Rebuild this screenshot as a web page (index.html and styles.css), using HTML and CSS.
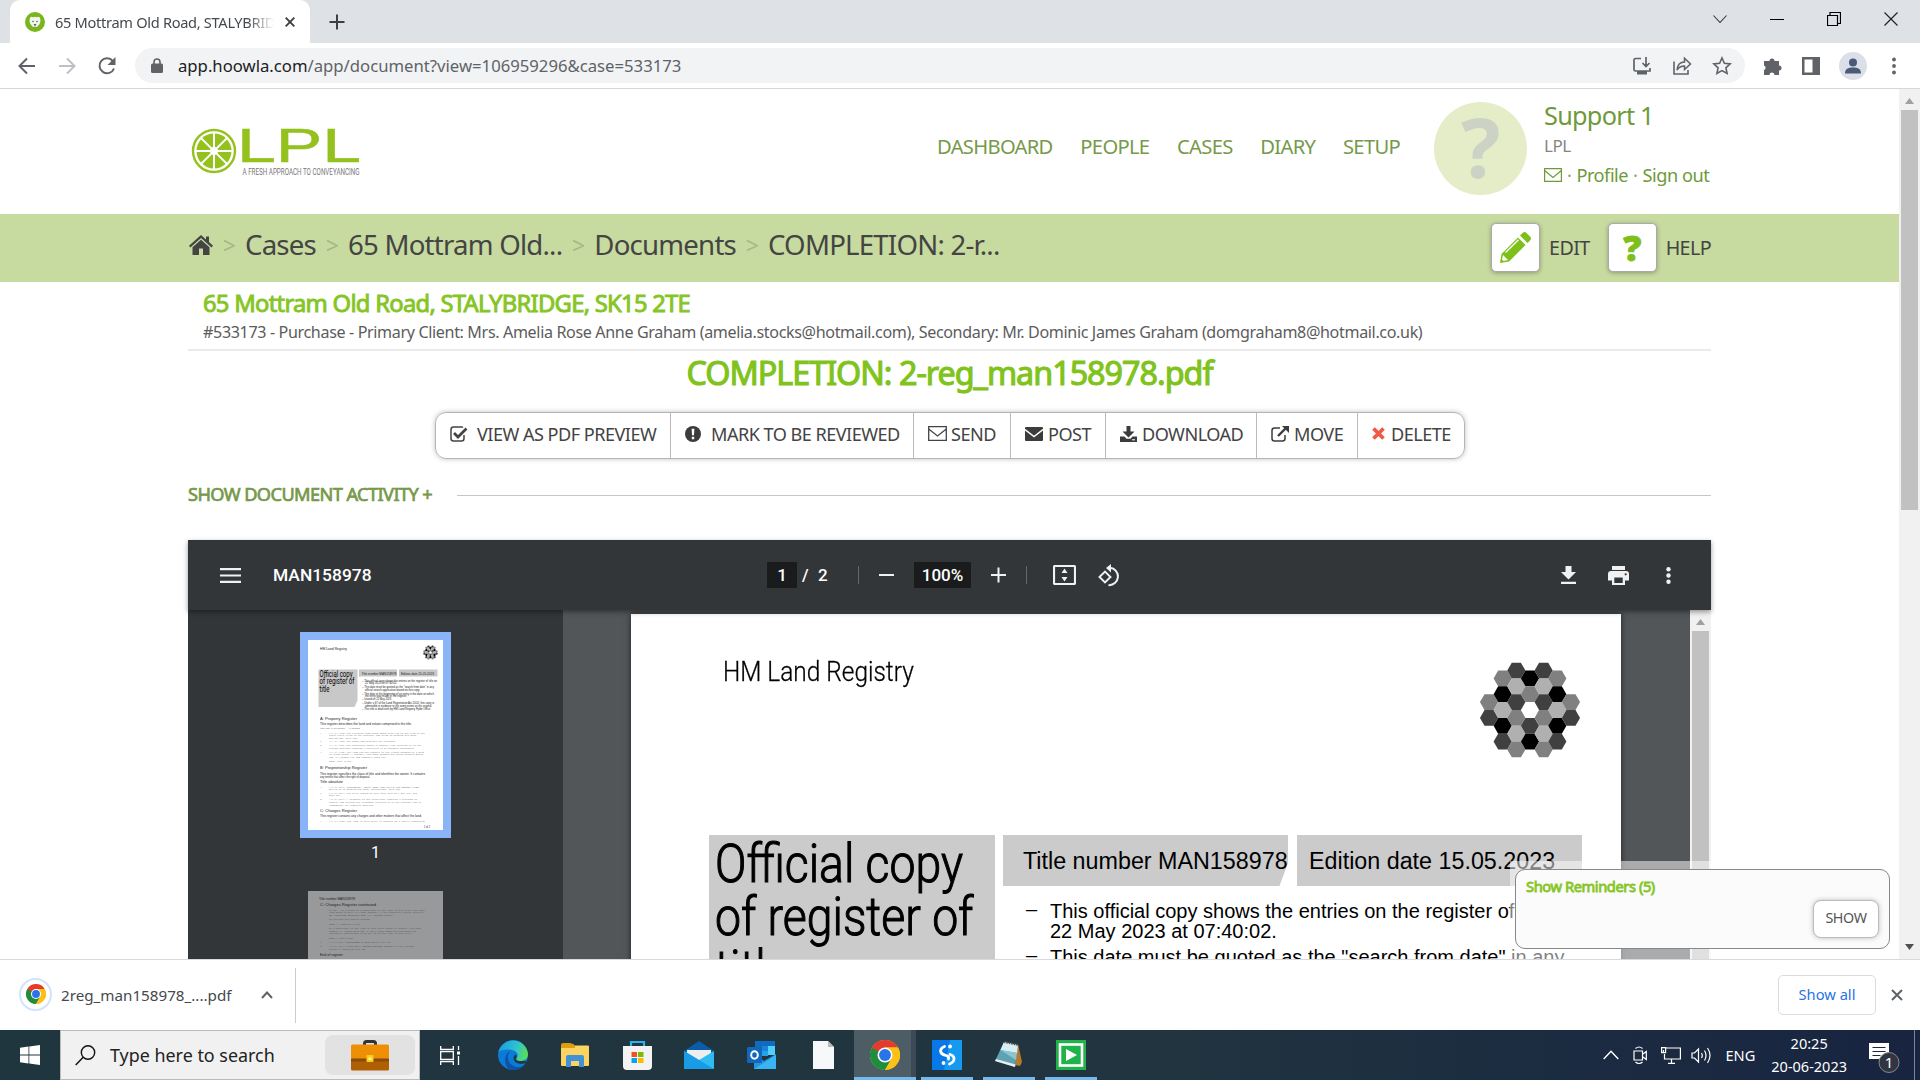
FILE: index.html
```html
<!DOCTYPE html>
<html lang="en">
<head>
<meta charset="utf-8">
<title>65 Mottram Old Road, STALYBRIDGE</title>
<link rel="stylesheet" href="styles.css">
</head>
<body>
<svg class="defs" width="0" height="0">
  <symbol id="chrome" viewBox="0 0 48 48">
    <circle cx="24" cy="24" r="24" fill="#fbc116"/>
    <path d="M24 24 3.2 12A24 24 0 0 0 24 48L34.4 30z" fill="#1e8e3e"/>
    <path d="M3.2 12A24 24 0 0 1 44.8 12H24L13.6 30z" fill="#e33b2e"/>
    <path d="M3.2 12 13.6 30 24 24z" fill="#1e8e3e"/>
    <path d="M24 12H44.8A24 24 0 0 1 24 48L34.4 30z" fill="#fbc116"/>
    <circle cx="24" cy="24" r="12" fill="#fff"/><circle cx="24" cy="24" r="9.5" fill="#2b74e8"/>
  </symbol>
  <symbol id="hexes" viewBox="-51 -49 102 98">
    <g id="hexgroup"></g>
  </symbol>
</svg>

<div class="tabstrip">
  <div class="tab">
    <svg width="20" height="20" viewBox="0 0 20 20"><circle cx="10" cy="10" r="10" fill="#7ab51d"/><path d="M5 6a2 2 0 0 1 3-.8 5 5 0 0 1 4 0A2 2 0 0 1 15 6c.7 2 .6 4-.4 6L12 15H8l-2.600-3C4.400 10 4.300 8 5 6z" fill="#f2f6ea"/><circle cx="8" cy="9.500" r=".8" fill="#567"/><circle cx="12" cy="9.500" r=".8" fill="#567"/><path d="M8.700 12h2.600L10 15z" fill="#567"/></svg>
    <span class="tab-title">65 Mottram Old Road, STALYBRIDGE</span>
    <svg class="tab-x" width="10" height="10" viewBox="0 0 10 10"><path d="M.7.7l8.600 8.600M9.300.7.7 9.300" stroke="#3c4043" stroke-width="1.900"/></svg>
  </div>
  <svg class="newtab" width="16" height="16" viewBox="0 0 16 16"><path d="M8 .5v15M.5 8h15" stroke="#3c4043" stroke-width="2"/></svg>
  <div class="winbtns">
    <svg viewBox="0 0 14 14"><path d="M.5 3.500 7 10.500l6.500-7" fill="none" stroke="#333" stroke-width="1.100"/></svg>
    <svg viewBox="0 0 14 14"><path d="M0 7.500h14" stroke="#000"/></svg>
    <svg viewBox="0 0 14 14"><path d="M.5 3.500h10v10H.5zM3 3V.5h10.500v11H11" fill="none" stroke="#000" stroke-width="1.200"/></svg>
    <svg viewBox="0 0 14 14"><path d="M.5.5l13 13M13.500.5l-13 13" stroke="#222" stroke-width="1.200"/></svg>
  </div>
</div>

<div class="toolbar">
  <svg class="nav-ic" viewBox="0 0 20 20"><path d="M18 10H3M10 2.500 2.500 10 10 17.500" fill="none" stroke="#5f6368" stroke-width="2"/></svg>
  <svg class="nav-ic" viewBox="0 0 20 20"><path d="M2 10h15M10 2.500l7.500 7.500-7.500 7.500" fill="none" stroke="#bdc1c6" stroke-width="2"/></svg>
  <svg class="nav-ic" viewBox="0 0 20 20"><path d="M17 12.500A7.500 7.500 0 1 1 15.800 5" fill="none" stroke="#5f6368" stroke-width="2"/><path d="M18.500 1v8h-8z" fill="#5f6368"/></svg>
  <div class="omnibox">
    <svg width="12" height="15" viewBox="0 0 12 15"><path d="M3 6V4a3 3 0 0 1 6 0v2" fill="none" stroke="#5f6368" stroke-width="1.600"/><rect y="5.500" width="12" height="9.500" rx="1.500" fill="#5f6368"/></svg>
    <span class="url"><b>app.hoowla.com</b>/app/document?view=106959296&amp;case=533173</span>
    <svg class="om-ic" viewBox="0 0 20 20"><path d="M9 2.500H3.500q-1.500 0-1.500 1.500v9.500q0 1.500 1.500 1.500h14.500v-3M14 1v9M10.500 7l3.500 3.500L17.500 7" fill="none" stroke="#5f6368" stroke-width="1.700"/><path d="M5 15h10v3.500H5z" fill="#5f6368"/></svg>
    <svg class="om-ic" viewBox="0 0 20 20"><path d="M2 5.500V18h14v-4" fill="none" stroke="#5f6368" stroke-width="1.600"/><path d="M5 14c.5-5 3-8 7.500-8V2.200L18.500 8l-6 5.500V10c-3.500 0-5.500 1-7.500 4z" fill="none" stroke="#5f6368" stroke-width="1.500"/></svg>
    <svg class="om-ic" viewBox="0 0 20 20"><path d="M10 2l2.400 5.300 5.800.6-4.300 3.900 1.200 5.700L10 14.600l-5.100 2.900 1.200-5.700L1.800 7.900l5.800-.6z" fill="none" stroke="#5f6368" stroke-width="1.600"/></svg>
  </div>
  <div class="tb-right">
    <svg viewBox="0 0 20 20"><path d="M1 5h5.500a2.500 2.500 0 1 1 5 0H16v4.500a2.500 2.500 0 1 1 0 5V19h-4.500a2.500 2.500 0 0 0-5 0H1v-5a2.400 2.400 0 0 0 0-4.500z" fill="#5f6368"/></svg>
    <svg viewBox="0 0 20 20"><path d="M1 1h18v18H1zM3.500 3.500v13h8v-13z" fill="#5f6368" fill-rule="evenodd"/></svg>
    <svg class="me" viewBox="0 0 28 28"><circle cx="14" cy="14" r="14" fill="#dadfe8"/><circle cx="14" cy="10.500" r="4" fill="#4a5a78"/><path d="M6 21.500c0-4.500 3-6 8-6s8 1.500 8 6z" fill="#4a5a78"/></svg>
    <svg viewBox="0 0 20 20"><g fill="#5f6368"><circle cx="10" cy="3.500" r="1.900"/><circle cx="10" cy="10" r="1.900"/><circle cx="10" cy="16.500" r="1.900"/></g></svg>
  </div>
</div>

<div class="viewport">
 <div class="page">
  <header class="header">
    <svg class="logo" width="172" height="52" viewBox="0 0 172 52">
      <circle cx="23" cy="24" r="21" fill="#fff" stroke="#95c11f" stroke-width="2.400"/>
      <circle cx="23" cy="24" r="17.500" fill="#95c11f"/>
      <path d="M23 5v38M4 24h38M9.600 10.600l26.800 26.800M36.400 10.600 9.600 37.400" stroke="#fff" stroke-width="2"/><circle cx="23" cy="24" r="4" fill="#fff"/>
      <text x="46" y="34.500" class="logo-big" textLength="124" lengthAdjust="spacingAndGlyphs">LPL</text>
      <text x="51.500" y="47.500" class="logo-small" textLength="117" lengthAdjust="spacingAndGlyphs">A FRESH APPROACH TO CONVEYANCING</text>
    </svg>
    <nav class="nav"><a>DASHBOARD</a><a>PEOPLE</a><a>CASES</a><a>DIARY</a><a>SETUP</a></nav>
    <div class="avatar">?</div>
    <div class="user">
      <div class="user-name">Support 1</div>
      <div class="user-co">LPL</div>
      <div class="user-links"><svg width="18" height="14" viewBox="0 0 18 14"><path d="M.6.6h16.800v12.800H.6zM.6 2.500 9 9.500l8.400-7" fill="none" stroke="#6f9a3a" stroke-width="1.200"/></svg><i>·</i><a>Profile</a><i>·</i><a>Sign out</a></div>
    </div>
  </header>

  <div class="crumbbar">
    <svg width="24" height="20" viewBox="0 0 24 20"><path d="M12 0l5 4.400V1.500h3v5.600l4 3.700-1.400 1.600L12 3 1.400 12.400 0 10.800z" fill="#444"/><path d="M12 4.800l8.500 7.500V20H14v-6.500h-4V20H3.500v-7.700z" fill="#444"/></svg>
    <i>&gt;</i><span>Cases</span><i>&gt;</i><span>65 Mottram Old...</span><i>&gt;</i><span>Documents</span><i>&gt;</i><span>COMPLETION: 2-r...</span>
    <div class="crumb-actions">
      <b class="sq"><svg width="31" height="31" viewBox="0 0 31 31"><path d="M0 31l1.500-9L18 5.500 25.500 13 9 29.500zM20 3.500l2.500-2.500q2-2 4 0l3.500 3.500q2 2 0 4L27.500 11z" fill="#7ebf1a"/><path d="M5.500 20.500 18.500 7.800" stroke="#fff" stroke-width="1.300"/><path d="M3 23l5 5-4.500 1-1.500-1.500z" fill="#fff"/></svg></b><em>EDIT</em>
      <b class="sq sq-q">?</b><em>HELP</em>
    </div>
  </div>

  <main class="content">
    <section class="case">
      <h2>65 Mottram Old Road, STALYBRIDGE, SK15 2TE</h2>
      <p>#533173 - Purchase - Primary Client: Mrs. Amelia Rose Anne Graham (amelia.stocks@hotmail.com), Secondary: Mr. Dominic James Graham (domgraham8@hotmail.co.uk)</p>
    </section>
    <h1>COMPLETION: 2-reg_man158978.pdf</h1>
    <div class="btns">
      <a class="b1"><svg width="18" height="16" viewBox="0 0 18 16"><path d="M14 9v3.500q0 2.500-2.500 2.500H3.500Q1 15 1 12.500v-9Q1 1 3.500 1h8q1 0 1.500.5" fill="none" stroke="#444" stroke-width="1.500"/><path d="M4 7l4 4L16.500 2.500" fill="none" stroke="#444" stroke-width="2.800"/></svg>VIEW AS PDF PREVIEW</a>
      <a class="b2"><svg width="16" height="16" viewBox="0 0 16 16"><circle cx="8" cy="8" r="8" fill="#3c3c3c"/><path d="M6.600 2.700h2.800L9 9.300H7zM6.800 10.800h2.400v2.400H6.800z" fill="#fff"/></svg>MARK TO BE REVIEWED</a>
      <a class="b3"><svg width="19" height="15" viewBox="0 0 19 15"><path d="M.7.7h17.600v13.600H.7zM.7 3l8.800 7L18.300 3" fill="none" stroke="#444" stroke-width="1.300"/></svg>SEND</a>
      <a class="b4"><svg width="18" height="14" viewBox="0 0 18 14"><rect width="18" height="14" rx="1" fill="#3c3c3c"/><path d="M0 2.500l9 7 9-7" fill="none" stroke="#fff" stroke-width="1.400"/></svg>POST</a>
      <a class="b5"><svg width="17" height="16" viewBox="0 0 17 16"><path d="M6.500 0h4v5.500h4l-6 6-6-6h4zM0 10.500h4.500l2 2.300h4l2-2.300H17V16H0z" fill="#3c3c3c"/><path d="M12 13.800h3" stroke="#fff"/></svg>DOWNLOAD</a>
      <a class="b6"><svg width="18" height="16" viewBox="0 0 18 16"><path d="M9 2H3.500Q1 2 1 4.500v8Q1 15 3.500 15h8q2.500 0 2.500-2.500V9" fill="none" stroke="#3c3c3c" stroke-width="1.500"/><path d="M7 10l8-8" stroke="#3c3c3c" stroke-width="2.400"/><path d="M11 0h7v7z" fill="#3c3c3c"/></svg>MOVE</a>
      <a class="b7"><svg width="13" height="13" viewBox="0 0 13 13"><path d="M1.500 1.500l10 10M11.500 1.500l-10 10" stroke="#f05a44" stroke-width="3.800"/></svg>DELETE</a>
    </div>
    <div class="activity"><span>SHOW DOCUMENT ACTIVITY +</span><hr></div>

    <div class="pdf">
      <div class="pdf-bar">
        <svg class="menu" width="21" height="15" viewBox="0 0 21 15"><path d="M0 1.200h21M0 7.500h21M0 13.800h21" stroke="#f1f1f1" stroke-width="2.200"/></svg>
        <span class="pdf-name">MAN158978</span>
        <span class="pdf-in pg">1</span><span class="slash">/</span><span class="total">2</span>
        <i class="sep"></i>
        <svg class="minus" width="15" height="16" viewBox="0 0 15 16"><path d="M0 8h15" stroke="#f1f1f1" stroke-width="2"/></svg>
        <span class="pdf-in zoom">100%</span>
        <svg class="plus" width="15" height="16" viewBox="0 0 15 16"><path d="M0 8h15M7.500.5v15" stroke="#f1f1f1" stroke-width="2"/></svg>
        <i class="sep sep2"></i>
        <svg class="fit" width="23" height="20" viewBox="0 0 23 20"><rect x="1" y="1" width="21" height="18" rx="1" fill="none" stroke="#f1f1f1" stroke-width="2.200"/><path d="M11.500 3.500 14.500 8h-6zM11.500 16.500 8.500 12h6z" fill="#f1f1f1"/></svg>
        <svg class="rot" width="23" height="23" viewBox="0 0 23 23"><path d="M1.500 13l5.500-5.500 5.500 5.500L7 18.500z" fill="none" stroke="#f1f1f1" stroke-width="1.900"/><path d="M12 3.800a8.400 8.400 0 1 1-1.500 17.300" fill="none" stroke="#f1f1f1" stroke-width="2"/><path d="M8 4l5-4v8.500z" fill="#f1f1f1"/></svg>
        <div class="pdf-right">
          <svg width="15" height="18" viewBox="0 0 15 18"><path d="M4.500 0h6v6H15l-7.500 7.500L0 6h4.500zM0 15.800h15V18H0z" fill="#f1f1f1"/></svg>
          <svg width="21" height="19" viewBox="0 0 21 19"><path d="M4 0h13v4H4zM3 5h15q3 0 3 3v6.500h-4V19H4v-4.500H0V8q0-3 3-3zM6.300 11.500V17h8.400v-5.500z" fill="#f1f1f1" fill-rule="evenodd"/><circle cx="17.700" cy="8.300" r="1.100" fill="#323639"/></svg>
          <svg width="5" height="17" viewBox="0 0 5 17"><g fill="#f1f1f1"><circle cx="2.500" cy="2.300" r="2.200"/><circle cx="2.500" cy="8.500" r="2.200"/><circle cx="2.500" cy="14.700" r="2.200"/></g></svg>
        </div>
      </div>
      <div class="pdf-body">
        <aside class="thumbs">
          <div class="thumb sel">
            <svg width="135" height="190" viewBox="0 0 135 190" class="mini">
              <rect width="135" height="190" fill="#fff"/>
              <text x="12" y="9.500" class="m4" textLength="27">HM Land Registry</text>
              <use href="#hexes" x="115" y="5" width="15" height="15"/>
              <path d="M10.500 29.500h39v31l-3 6.500h-36zM51 29.500h38v7H51zM91 29.500h38.500v7H91z" fill="#c8c8c8"/>
              <g class="m7"><text x="11.500" y="36.500" textLength="33">Official copy</text><text x="11.500" y="44" textLength="35">of register of</text><text x="11.500" y="51.500" textLength="10">title</text></g>
              <g class="m3 dk"><text x="53.500" y="34.500" textLength="35">Title number MAN158978</text><text x="93" y="34.500" textLength="33">Edition date 15.05.2023</text>
              <text x="54" y="41.500" textLength="75">– This official copy shows the entries on the register of title on</text><text x="57" y="44.300" textLength="32">22 May 2023 at 07:40:02.</text><text x="54" y="48.300" textLength="72">– This date must be quoted as the "search from date" in any</text><text x="57" y="51.300" textLength="55">official search application based on this copy.</text><text x="54" y="54.500" textLength="72">– The date at the beginning of an entry is the date on which</text><text x="57" y="57.300" textLength="42">the entry was made in the register.</text><text x="54" y="60.300" textLength="30">– Issued on 22 May 2023.</text><text x="54" y="64.300" textLength="72">– Under s.67 of the Land Registration Act 2002, this copy is</text><text x="57" y="67.200" textLength="67">admissible in evidence to the same extent as the original.</text><text x="54" y="70.200" textLength="69">– This title is dealt with by HM Land Registry Fylde Office.</text>
              <text x="12" y="84.500" textLength="92">This register describes the land and estate comprised in the title.</text><text x="12" y="134.500" textLength="105">This register specifies the class of title and identifies the owner. It contains</text><text x="12" y="137.500" textLength="50">any entries that affect the right of disposal.</text><text x="12" y="143.200" textLength="23">Title absolute</text><text x="12" y="177.300" textLength="102">This register contains any charges and other matters that affect the land.</text></g>
              <g class="m4"><text x="12" y="79.500" textLength="37">A: Property Register</text><text x="12" y="129.200" textLength="47">B: Proprietorship Register</text><text x="12" y="171.800" textLength="37">C: Charges Register</text></g>
              <g class="m3 lt"><text x="12" y="89.300" textLength="40">GREATER MANCHESTER : TAMESIDE</text><text x="21" y="93.700" textLength="96">(11.04.1975) The Freehold land shown edged with red on the plan of the</text><text x="21" y="96.300" textLength="88">above title filed at the Registry and being 65 Mottram Old Road,</text><text x="21" y="99" textLength="30">Stalybridge (SK15 2TE).</text><text x="21" y="102" textLength="67">(11.04.1975) The mines and minerals are excepted.</text><text x="21" y="106" textLength="92">(11.04.1975) The Conveyance dated 15 January 1975 referred to in the</text><text x="21" y="109" textLength="86">Charges Register contains a provision as to boundary structures.</text><text x="21" y="112.600" textLength="95">(11.04.1975) The land has the benefit of the rights granted by a Deed</text><text x="21" y="115.200" textLength="94">of Grant dated 14 October 1975 made between the North Western Board</text><text x="21" y="117.700" textLength="58">and (2) Thomas Fay and Campbell Ross Fay.</text><text x="21" y="122" textLength="23">NOTE: Copy filed.</text>
              <text x="21" y="147.500" textLength="90">(12.04.2021) PROPRIETOR: AMELIA ROSE ANNE GRAHAM and DOMINIC JAMES</text><text x="21" y="150" textLength="72">GRAHAM of 65 Mottram Old Road, Stalybridge, SK15 2TE.</text><text x="21" y="153.700" textLength="88">(12.04.2021) The price stated to have been paid on 9 May 2021 was</text><text x="21" y="156" textLength="12">£320,000.</text><text x="21" y="160" textLength="88">(12.04.2021) A transfer to the proprietor contains a covenant to</text><text x="21" y="163" textLength="92">observe and perform the covenants referred to in the register and of</text><text x="21" y="165.600" textLength="46">indemnity in respect thereof.</text><text x="21" y="182" textLength="96">(11.04.1975) The land in this title is subject to a yearly rentcharge</text>
              <text x="12" y="93.700">1</text><text x="12" y="102">2</text><text x="12" y="106">3</text><text x="12" y="112.600">4</text><text x="12" y="147.500">1</text><text x="12" y="153.700">2</text><text x="12" y="160">3</text><text x="12" y="182">1</text></g>
              <text x="116" y="187.500" class="m3 dk" textLength="6">1 of 2</text>
            </svg>
          </div>
          <div class="thumb-no">1</div>
          <div class="thumb dim">
            <svg width="135" height="190" viewBox="0 0 135 190" class="mini">
              <rect width="135" height="190" fill="#98999b"/>
              <text x="11" y="9" class="m3 dk" textLength="36">Title number MAN158978</text>
              <text x="12" y="15" class="m4" textLength="56">C: Charges Register continued</text>
              <g class="m3 lt2"><text x="21" y="19.500" textLength="96">of £31. 10s created by a Conveyance of the land in this title and other</text><text x="21" y="22.200" textLength="94">land dated 28 July 1919 made between (1) The Honourable George Nicholas</text><text x="21" y="24.800" textLength="65">de Yarburgh Bateson and (2) Thomas Marsh.</text><text x="21" y="28.800" textLength="42">The said deed also contains covenants.</text><text x="21" y="34" textLength="32">NOTE 1: Abstract filed.</text><text x="21" y="37.800" textLength="92">By a Conveyance of the land in this title dated 15 January 1925 made</text><text x="21" y="40.500" textLength="87">between (1) Thomas Marsh and (2) Mary Hannah Ogden the rentcharge was</text><text x="21" y="43.200" textLength="84">informally apportioned as to £3. 7s to the land in this title.</text><text x="21" y="48" textLength="25">NOTE 2: Copy filed.</text><text x="12" y="52">2</text><text x="21" y="52" textLength="64">(12.04.2021) REGISTERED CHARGE dated 9 May 2021.</text><text x="12" y="56">3</text><text x="21" y="56" textLength="85">(12.04.2021) Proprietor: NEWTON BUILDING SOCIETY of The Savings</text><text x="21" y="58.600" textLength="37">Chapter 21 Cumberland SK15 2JB.</text></g>
              <text x="12" y="65" class="m3 dk" textLength="23">End of register</text>
            </svg>
          </div>
        </aside>
        <div class="doc-area">
          <article class="doc">
            <div class="doc-head">
              <div class="hmlr">HM Land Registry</div>
              <svg class="hex" width="102" height="98" viewBox="-51 -49 102 98"><use href="#hexgroup"/></svg>
            </div>
            <div class="doc-grid">
              <div class="official"><p>Official copy<br>of register of<br>title</p></div>
              <div class="doc-main">
                <div class="boxes"><div class="box cut">Title number MAN158978</div><div class="box ed">Edition date 15.05.2023</div></div>
                <ul class="notes">
                  <li>This official copy shows the entries on the register of title on<br>22 May 2023 at 07:40:02.</li>
                  <li>This date must be quoted as the "search from date" in any</li>
                </ul>
              </div>
            </div>
          </article>
        </div>
        <div class="sb"><svg width="9" height="6" viewBox="0 0 9 6"><path d="M0 6 4.500 0 9 6z" fill="#a0a0a0"/></svg><div class="sb-thumb"></div></div>
      </div>
    </div>
  </main>
 </div>
 <div class="sb page-sb"><svg width="9" height="6" viewBox="0 0 9 6"><path d="M0 6 4.500 0 9 6z" fill="#a0a0a0"/></svg><div class="sb-thumb"></div><svg class="down" width="9" height="6" viewBox="0 0 9 6"><path d="M0 0 4.500 6 9 0z" fill="#505050"/></svg></div>
 <div class="rem-wrap"><div class="reminder"><strong>Show Reminders (5)</strong><span class="show">SHOW</span></div></div>
</div>

<div class="downloads">
  <div class="dl-icon"><svg width="20" height="20"><use href="#chrome"/></svg></div>
  <span class="dl-name">2reg_man158978_....pdf</span>
  <svg class="dl-chev" width="12" height="8" viewBox="0 0 12 8"><path d="M1 7l5-5.500L11 7" fill="none" stroke="#5f6368" stroke-width="2"/></svg>
  <i class="dl-div"></i>
  <span class="showall">Show all</span>
  <svg width="12" height="12" viewBox="0 0 12 12"><path d="M1 1l10 10M11 1 1 11" stroke="#5f6368" stroke-width="2"/></svg>
</div>

<div class="taskbar">
  <div class="start"><svg width="20" height="20" viewBox="0 0 20 20"><path d="M0 2.800 8.500 1.600v8H0zM9.300 1.500 20 0v9.600H9.300zM0 10.400h8.500v8L0 17.200zM9.300 10.400H20V20L9.300 18.500z" fill="#fff"/></svg></div>
  <div class="search">
    <svg width="21" height="21" viewBox="0 0 21 21"><circle cx="13" cy="7.500" r="6.700" fill="none" stroke="#111" stroke-width="1.400"/><path d="M8.200 12.300.7 20" stroke="#111" stroke-width="1.500"/></svg>
    <span>Type here to search</span>
    <div class="case-ic"><svg width="38" height="31" viewBox="0 0 38 31"><path d="M13.500 5V3.500q0-2 2-2h7q2 0 2 2V5" fill="none" stroke="#333" stroke-width="3"/><rect y="4.500" width="38" height="14" rx="1.500" fill="#ee8f05"/><path d="M0 18.500h38v10.500q0 1.500-1.500 1.500h-35Q0 30.500 0 29z" fill="#b06004"/><path d="M0 18.500h38v3H0z" fill="#8f4b02"/><rect x="15.500" y="15" width="7" height="7" rx="1" fill="#fdd017"/><rect x="17.500" y="17.500" width="3" height="2.500" fill="#fff29a"/></svg></div>
  </div>
  <div class="apps">
    <div class="app tv"><svg width="20" height="19" viewBox="0 0 20 19"><path d="M.7 0v3.300h12.600V0M.7 19v-3.300h12.600V19M.7 5.500h12.600v8H.7zM18.500 0v4M18.500 10v9" fill="none" stroke="#fff" stroke-width="1.300"/><path d="M17 5.500h3v3h-3z" fill="#fff"/></svg></div>
    <div class="app"><svg width="30" height="30" viewBox="0 0 30 30"><defs><linearGradient id="eg" x1="0" x2="1" y1=".3" y2=".5"><stop offset="0" stop-color="#1b9de2"/><stop offset=".6" stop-color="#2fc3cf"/><stop offset="1" stop-color="#5fdc52"/></linearGradient></defs><circle cx="15" cy="15" r="15" fill="#0c7bd8"/><path d="M.5 12A15 15 0 0 1 30 14c0 5-4 7-7.500 7-4 0-5-2-3.500-3.500 2-3-.5-6.500-5-7.500C8 9 3 10 .5 12z" fill="url(#eg)"/><path d="M12 11c-4 6-2 13 5 15.500 5 1.500 9-.5 11-3.500A15 15 0 0 1 12 29.700C5 26 6 14 12 11z" fill="#0f53a5"/><path d="M18.500 17.500c-1.500 2 0 3.500 4 3.500h5.500l1 1.500c-6 3-13 1-13.500-4 0-2 1-3.500 2-4 1.500 1 1.500 2 1 3z" fill="#213a48"/></svg></div>
    <div class="app"><svg width="28" height="24" viewBox="0 0 28 24"><path d="M0 2q0-2 2-2h8l3 3h-2v5H0z" fill="#d99a0b"/><rect y="2.500" width="28" height="20.500" rx="1" fill="#fcd462"/><path d="M0 2h10l2-1.500L14 3v2H0z" fill="#dfa010"/><path d="M5 24V14q0-2 2-2h14q2 0 2 2v10h-5v-6h-8v6z" fill="#3f92d8"/></svg></div>
    <div class="app"><svg width="29" height="29" viewBox="0 0 29 29"><path d="M8 8V1h13v7" fill="none" stroke="#2bb2ec" stroke-width="2.200"/><path d="M0 5h29v20q0 4-4 4H4q-4 0-4-4z" fill="#f3f3f3"/><path d="M8.500 11h5.500v5H8.500z" fill="#f25022"/><path d="M15 11h5.500v5H15z" fill="#7fba00"/><path d="M8.500 17h5.500v5H8.500z" fill="#00a4ef"/><path d="M15 17h5.500v5H15z" fill="#ffb900"/></svg></div>
    <div class="app"><svg width="30" height="28" viewBox="0 0 30 28"><path d="M0 10 15 0l15 10v3H0z" fill="#0b5ba9"/><path d="M3 9h24v6L15 20 3 15z" fill="#eee"/><path d="M0 10l15 9 15-9v18H0z" fill="#2dbdf2"/><path d="M15 19 30 28H0V10z" fill="#1a9be6"/></svg></div>
    <div class="app"><svg width="29" height="28" viewBox="0 0 29 28"><path d="M8 0h20v14H8z" fill="#0d6cc2"/><path d="M15 5h6v5h-6z" fill="#1b84d8"/><path d="M21 5h7v9h-7z" fill="#4fd0fb"/><path d="M14 10h7v5h-7z" fill="#23a3ea"/><path d="M7 13l10 7 12-7v15H7z" fill="#2294e2"/><path d="M7 28 29 14v14z" fill="#3ab5f4"/><rect y="6" width="15" height="16" rx="1.500" fill="#1267bd"/><ellipse cx="7.500" cy="14" rx="3.300" ry="3.700" fill="none" stroke="#fff" stroke-width="2"/></svg></div>
    <div class="app"><svg width="21" height="28" viewBox="0 0 21 28"><path d="M0 0h15l6 6v22H0z" fill="#f7f8f9"/><path d="M15 0v6h6z" fill="#b5babd"/></svg></div>
    <div class="app active"><svg width="30" height="30"><use href="#chrome"/></svg></div>
    <div class="app run"><svg width="30" height="30" viewBox="0 0 30 30"><rect width="30" height="30" fill="#0877e8"/><path d="M18 0h12v30H12z" fill="#1699f0"/><path d="M12.500 6.500q-5 2-3.500 6 1 2 5 3 3.500 1 2.500 3.500M17.500 24q5-2 4.500-6-.5-2.500-4-3.500" fill="none" stroke="#fff" stroke-width="2.800" stroke-linecap="round"/><circle cx="18" cy="6.500" r="1.900" fill="#fff"/><circle cx="11.500" cy="23" r="1.900" fill="#fff"/></svg></div>
    <div class="app run"><svg width="28" height="28" viewBox="0 0 28 28"><path d="M23 3l4 18-2 4-5-1z" fill="#b8792c"/><path d="M9 1l14 3-3 22L0 20z" fill="#5da3b3"/><path d="M9 1l14 3-1 8L5.500 9z" fill="#d6edf2"/><path d="M5.500 9 22 12l-1 7z" fill="#8cc4cf"/><path d="M0 20l20 6 .5-2.500L1 18z" fill="#e8eef0"/><path d="M9 1l14 3" stroke="#555" stroke-width="2" stroke-dasharray="1.500 1"/></svg></div>
    <div class="app run"><svg width="30" height="30" viewBox="0 0 30 30"><rect width="30" height="30" fill="#21b34b"/><rect x="4" y="4.500" width="22" height="21" fill="none" stroke="#fff" stroke-width="2.600"/><path d="M10 9l11 6-11 6z" fill="#fff"/></svg></div>
  </div>
  <div class="tray">
    <svg width="16" height="10" viewBox="0 0 16 10"><path d="M.7 9 8 1.300 15.300 9" fill="none" stroke="#fff" stroke-width="1.400"/></svg>
    <svg width="14" height="18" viewBox="0 0 14 18"><path d="M1 5h8.500v9H1zM10 8l3.300-2.500v8L10 11M2.500 2.500q3.500-3 7 0M2.500 16q3.500 3 7 0" fill="none" stroke="#fff" stroke-width="1.200"/></svg>
    <svg width="20" height="17" viewBox="0 0 20 17"><path d="M5 1h14.400v11H3.500V7M7 16.300h7M10.500 12v4M.6.6h4v5h-4zM2.500 3v3" fill="none" stroke="#fff" stroke-width="1.200"/></svg>
    <svg class="spk" width="20" height="17" viewBox="0 0 20 17"><path d="M1 6h2.500L7.500 2v13l-4-4H1zM10.500 6q1.500 2.500 0 5M13.500 3.500q3 5 0 10M16.500 1q5 7.500 0 15" fill="none" stroke="#fff" stroke-width="1.200"/></svg>
    <span class="eng">ENG</span>
    <span class="clock">20:25<br>20-06-2023</span>
    <svg class="notif" width="32" height="32" viewBox="0 0 32 32"><path d="M1 1h20v16h-6l-4 4v-4H1z" fill="#fff"/><path d="M4.500 5.500h13M4.500 9.500h13M4.500 13.500h8" stroke="#1a2740" stroke-width="1.200"/><circle cx="21" cy="20.500" r="10" fill="#303641" stroke="#888" stroke-width="1"/><text x="21" y="26" text-anchor="middle" class="n1">1</text></svg>
    <i class="peek"></i>
  </div>
</div>
<script src="page.js"></script>
</body>
</html>
```
FILE: styles.css
```css
* { box-sizing: border-box; }
html, body { margin: 0; width: 1920px; height: 1080px; overflow: hidden; }
body { font-family: "Noto Sans", "Open Sans", sans-serif; background: #fff; display: flex; flex-direction: column; white-space: nowrap; }
svg { display: block; flex: none; }
i, em { font-style: normal; }
h1, h2, p, ul { margin: 0; padding: 0; }
.defs { position: absolute; }

/* browser chrome */
.tabstrip { height: 43px; flex: none; background: #dee1e6; display: flex; align-items: center; padding-left: 10px; }
.tab { width: 300px; height: 43px; background: #fff; border-radius: 10px 10px 0 0; display: flex; align-items: center; padding: 0 15px; }
.tab-title { font-size: 14.6px; letter-spacing: -.3px; color: #45494d; width: 219px; margin-left: 10px; overflow: hidden; -webkit-mask-image: linear-gradient(90deg, #000 88%, transparent); mask-image: linear-gradient(90deg, #000 88%, transparent); }
.tab-x { margin-left: 11px; }
.newtab { margin-left: 19px; }
.winbtns { margin-left: auto; display: flex; gap: 43px; padding: 0 22px 6px 0; }
.winbtns svg { width: 14px; height: 14px; }
.toolbar { height: 46px; flex: none; border-bottom: 1px solid #d5d7da; display: flex; align-items: center; padding-left: 17px; }
.nav-ic { width: 20px; height: 20px; margin-right: 20px; }
.nav-ic + .nav-ic + .nav-ic { margin-right: 18px; }
.omnibox { width: 1610px; height: 35px; border-radius: 18px; background: #f1f3f4; display: flex; align-items: center; padding: 0 13px 0 16px; }
.url { font-size: 16.7px; color: #5f6368; margin-left: 15px; flex: 1; }
.url b { font-weight: 400; color: #202124; }
.om-ic { width: 20px; height: 20px; margin-left: 20px; }
.omnibox .url + .om-ic { margin-left: 0; }
.tb-right { display: flex; align-items: center; gap: 18px; margin-left: 18px; }
.tb-right svg { width: 20px; height: 20px; }
.tb-right .me { width: 28px; height: 28px; margin: 0 -1px 0 0; }

/* web page */
.viewport { height: 870px; flex: none; display: flex; overflow: hidden; position: relative; }
.page { width: 1899px; }
.header { height: 125px; display: flex; align-items: flex-start; padding-left: 191px; }
.logo { margin-top: 38px; }
.logo-big { font: 49px "Liberation Sans", sans-serif; fill: #95c11f; stroke: #95c11f; stroke-width: .5; }
.logo-small { font: 9.5px "Roboto", sans-serif; fill: #777; }
.nav { display: flex; justify-content: space-between; width: 463px; margin: 44px 0 0 574px; font-size: 20.2px; letter-spacing: -.7px; line-height: 26px; color: #76994a; }
.avatar { width: 93px; height: 93px; margin: 13px 0 0 34px; border-radius: 50%; background: #e5ecc8; color: #cdd3c4; font: bold 83px/88px "Noto Sans", sans-serif; text-align: center; }
.user { margin-left: 17px; }
.user-name { font-size: 25.3px; letter-spacing: -.75px; line-height: 30px; color: #6f9a3a; margin-top: 11px; }
.user-co { font-size: 17px; letter-spacing: -.5px; line-height: 24px; color: #858585; margin-top: 4px; }
.user-links { display: flex; align-items: center; font-size: 18.2px; letter-spacing: -.48px; line-height: 26px; margin-top: 4px; color: #6f9a3a; }
.user-links i { margin: 0 5px; color: #8aa36a; }
.crumbbar { height: 68px; background: #c7da9f; display: flex; align-items: center; padding: 0 188px 7px 189px; font-size: 27.6px; letter-spacing: -.78px; color: #444; }
.crumbbar > i { width: 32px; text-align: center; color: #a4b886; font-size: 23px; }
.crumbbar > span { position: relative; top: -1px; }
.crumb-actions { margin-left: auto; display: flex; align-items: center; font-size: 19.7px; letter-spacing: -.6px; padding-top: 5px; }
.crumb-actions em { margin-left: 9px; }
.sq { width: 49px; height: 49px; border-radius: 5px; border: 1px solid #aaa; background: #fff; box-shadow: 0 1px 4px rgba(0,0,0,.3); display: flex; align-items: center; justify-content: center; }
.sq-q { margin-left: 18px; color: #7ebf1a; font: 800 36px/49px "Open Sans", sans-serif; -webkit-text-stroke: .8px #7ebf1a; }
.content { width: 1523px; margin-left: 188px; }
.case { padding-left: 15px; height: 69px; border-bottom: 2px solid #ebebeb; }
.case h2 { font-size: 23.8px; letter-spacing: -.74px; line-height: 30px; padding-top: 6px; font-weight: 400; color: #86c526; -webkit-text-stroke: .9px #86c526; }
.case p { font-size: 16.1px; letter-spacing: -.36px; line-height: 20px; color: #5c5c5c; margin-top: 4px; }
h1 { text-align: center; font-size: 32.3px; letter-spacing: -1px; line-height: 42px; font-weight: 400; color: #7fc31c; -webkit-text-stroke: 1.1px #7fc31c; }
.btns { margin: 19px 0 0 247px; width: 1030px; height: 47px; display: flex; border: 1px solid #b5b5b5; border-radius: 11px; box-shadow: 0 0 5px rgba(0,0,0,.25); font-size: 18.1px; letter-spacing: -.52px; color: #444; }
.btns a { display: flex; align-items: center; padding: 0 0 4px 14px; border-left: 1px solid #bbb; }
.btns a:first-child { border-left: 0; }
.b1 { width: 234px; } .b1 svg { margin-right: 9px; }
.b2 { width: 243px; } .b2 svg { margin-right: 10px; }
.b3 { width: 97px; } .b3 svg { margin-right: 4px; }
.b4 { width: 95px; } .b4 svg { margin-right: 5px; }
.b5 { width: 151px; } .b5 svg { margin-right: 5px; }
.b6 { width: 101px; } .b6 svg { margin-right: 5px; }
.b7 { width: 107px; } .b7 svg { margin-right: 6px; }
.activity { display: flex; align-items: center; height: 30px; margin-top: 21px; font-size: 18.2px; letter-spacing: -.59px; color: #76994a; -webkit-text-stroke: .7px #76994a; }
.activity span { padding-bottom: 2px; }
.activity hr { width: 1254px; border: 0; border-top: 1px solid #c6c6c6; margin: 0 0 0 auto; }

/* embedded pdf viewer */
.pdf { height: 420px; margin-top: 30px; background: #525659; font-family: Roboto, sans-serif; }
.pdf-bar { height: 70px; background: #323639; display: flex; align-items: center; padding: 0 40px 0 32px; color: #fff; position: relative; box-shadow: 0 2px 5px rgba(0,0,0,.4); z-index: 1; font-size: 17px; font-weight: 500; }
.pdf-name { margin-left: 32px; width: 494px; font-size: 17.4px; }
.pdf-in { background: #191b1c; height: 26px; line-height: 26px; text-align: center; }
.pg { width: 30px; }
.slash { margin-left: 5px; width: 16px; }
.total { width: 40px; }
.sep { width: 1px; height: 18px; background: #62666a; }
.minus { margin-left: 20px; }
.zoom { width: 57px; margin-left: 20px; }
.plus { margin-left: 20px; }
.sep2 { margin-left: 20px; }
.fit { margin-left: 26px; }
.rot { margin-left: 22px; }
.pdf-right { margin-left: auto; display: flex; align-items: center; gap: 32px; }
.pdf-right svg:last-child { margin-left: 5px; }
.pdf-body { height: 350px; display: flex; overflow: hidden; }
.thumbs { width: 375px; background: #323639; display: flex; flex-direction: column; align-items: center; padding-top: 22px; }
.sel { border: 8px solid #8ab4f8; }
.thumb-no { color: #fff; font-size: 16px; line-height: 20px; margin: 5px 0 28px; height: 20px; }
.mini text { font-family: "Liberation Sans", sans-serif; fill: #222; }
.mini .m7 text { font: 8.5px Roboto, sans-serif; fill: #000; }
.mini .m3 text, .mini text.m3 { font-size: 3.2px; }
.mini .m4 text, .mini text.m4 { font-size: 4.1px; }
.mini .lt text { font-family: "Liberation Mono", monospace; fill: #777; font-size: 2.5px; }
.mini .lt2 text { font-family: "Liberation Mono", monospace; fill: #555; font-size: 2.5px; }
.doc-area { width: 1127px; padding: 4px 69px 0 68px; }
.doc { background: #fff; height: 600px; box-shadow: 0 0 6px rgba(0,0,0,.6); color: #000; font-family: "Liberation Sans", Arial, sans-serif; padding: 0 0 0 78px; }
.doc-head { height: 221px; display: flex; align-items: flex-start; }
.hmlr { font: 300 27.5px/40px Roboto, sans-serif; -webkit-text-stroke: .3px #000; transform: scaleX(.888); transform-origin: 0 50%; width: 189px; margin: 38px 0 0 14px; }
.hex { margin: 47px 0 0 567px; }
.doc-grid { display: flex; gap: 8px; height: 380px; }
.official { width: 286px; background: #cbcbcb; }
.official p { font: 300 54px/53px Roboto, sans-serif; -webkit-text-stroke: 1.1px #000; transform: scaleX(.858); transform-origin: 0 0; margin: 2px 0 0 6px; }
.boxes { display: flex; gap: 9px; }
.box { width: 285px; height: 51px; background: #cbcbcb; font-size: 23.3px; line-height: 53px; padding-left: 20px; }
.cut { clip-path: polygon(0 0, 100% 0, 100% 55%, 97% 100%, 0 100%); }
.ed { padding-left: 12px; }
.notes { list-style: none; width: 570px; margin-top: 15px; overflow: hidden; font-size: 20px; line-height: 20px; }
.notes li { margin-bottom: 6px; padding-left: 47px; text-indent: -24px; }
.notes li::before { content: "–"; display: inline-block; width: 24px; text-indent: 0; position: relative; top: -2px; }
.sb { width: 21px; background: #f1f1f1; display: flex; flex-direction: column; align-items: center; padding-top: 9px; }
.sb-thumb { width: 17px; height: 400px; flex: none; background: #c1c1c1; margin-top: 6px; }
.page-sb { height: 870px; }
.page-sb .down { margin-top: auto; margin-bottom: 9px; }

/* floating reminder */
.rem-wrap { position: absolute; left: 1510px; top: 772px; width: 389px; height: 98px; background: rgba(255,255,255,.5); padding: 8px 0 0 5px; }
.reminder { width: 375px; height: 80px; border: 1px solid #888; border-radius: 10px; background: #fbfbfb; display: flex; justify-content: space-between; padding: 5px 10px 0 10px; }
.reminder strong { font-size: 14.7px; letter-spacing: -.43px; line-height: 22px; font-weight: 400; color: #86c526; -webkit-text-stroke: .8px #86c526; }
.show { width: 66px; height: 38px; margin-top: 25px; border: 1px solid #bbb; border-radius: 8px; background: #fff; box-shadow: 0 0 5px rgba(0,0,0,.25); text-align: center; font-size: 14.3px; letter-spacing: -.4px; line-height: 33px; color: #555; }

/* download shelf */
.downloads { height: 71px; flex: none; border-top: 1px solid #d8d9db; display: flex; align-items: center; padding: 0 17px 0 19px; }
.dl-icon { width: 33px; height: 33px; border: 2px solid #d2e3fb; border-radius: 50%; display: flex; align-items: center; justify-content: center; margin-top: -2px; }
.dl-name { width: 200px; margin-left: 9px; font-size: 15.2px; color: #45494d; }
.dl-div { width: 1px; height: 55px; background: #ccc; margin-left: 22px; }
.showall { margin-left: auto; width: 98px; height: 40px; border: 1px solid #dadce0; border-radius: 5px; color: #2b73e8; font-size: 14.7px; line-height: 36px; text-align: center; margin-right: 15px; }

/* taskbar */
.taskbar { height: 50px; flex: none; display: flex; background: linear-gradient(90deg, #20363f, #21343f 60%, #1c2c41 80%, #182440); color: #fff; }
.start { width: 60px; display: flex; align-items: center; padding-left: 20px; }
.search { width: 360px; background: #f1f1f1; border: 1px solid #bbb; display: flex; align-items: center; padding-left: 14px; color: #222; font-size: 17.9px; }
.search span { margin-left: 14px; width: 215px; }
.case-ic { width: 90px; height: 40px; border-radius: 8px; background: #e2e2e2; display: flex; align-items: center; justify-content: center; }
.apps { display: flex; }
.app { width: 62px; display: flex; align-items: center; justify-content: center; border-bottom: 3px solid transparent; padding-top: 3px; background-clip: padding-box; }
.tv { margin-left: -1px; margin-right: 1px; }
.active { background: linear-gradient(90deg, #4d5d66 92%, #3b4a54 92%); border-bottom-color: #76b9ed; }
.run { width: 52px; margin: 0 5px; border-bottom-color: #76b9ed; }
.tray { margin-left: auto; display: flex; align-items: center; gap: 14px; font-size: 14.5px; }
.tray .spk { margin-left: -4px; }
.tray .eng { margin-left: 0; font-size: 14.6px; }
.tray .clock { text-align: center; line-height: 23px; margin-left: 2px; }
.notif { margin: 5px 0 0 7px; }
.n1 { font: 15px "Noto Sans", sans-serif; fill: #fff; }
.peek { width: 1px; height: 50px; background: #7b8594; margin: 0 5px 0 0; }
```
FILE: page.js
```js
// Registry emblem: flat-topped hexagons in seven columns, shades listed top to bottom
const P = 15.77, W = 18.2;
const cols = {
  0: [[-2, '#000'], [-1, '#808080'], [1, '#404040'], [2, '#000']],
  1: [[-2.5, '#404040'], [-1.5, '#b0b0b0'], [-0.5, '#404040'], [0.5, '#808080'], [1.5, '#b0b0b0'], [2.5, '#808080']],
  2: [[-2, '#808080'], [-1, '#000'], [0, '#b0b0b0'], [1, '#000'], [2, '#404040']],
  3: [[-0.5, '#808080'], [0.5, '#404040']]
};
let out = '';
for (let c = -3; c <= 3; c++) {
  for (const [r, fill] of cols[Math.abs(c)]) {
    const x = c * W * 0.75, y = r * P, h = P / 2;
    out += `<path fill="${fill}" d="M${x - W / 2} ${y}L${x - W / 4} ${y - h}H${x + W / 4}L${x + W / 2} ${y}L${x + W / 4} ${y + h}H${x - W / 4}z"/>`;
  }
}
document.getElementById('hexgroup').innerHTML = out;

// Thumbnail lines scale their glyphs to the line length
document.querySelectorAll('.mini text[textLength]').forEach(t => t.setAttribute('lengthAdjust', 'spacingAndGlyphs'));
```
